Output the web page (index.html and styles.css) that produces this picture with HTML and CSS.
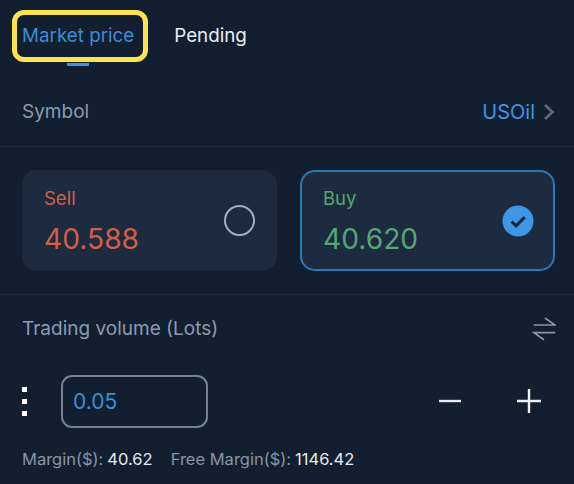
FILE: index.html
```html
<!DOCTYPE html>
<html lang="en">
<head>
<meta charset="utf-8">
<title>Market order</title>
<link rel="stylesheet" href="styles.css">
</head>
<body>
<main class="panel">
  <nav class="tabs">
    <div class="tab tab-active">Market price<span class="tab-mark"></span><span class="highlight"></span></div>
    <div class="tab">Pending</div>
  </nav>
  <section class="row symbol-row">
    <span class="label">Symbol</span>
    <span class="symbol-value">USOil
      <svg class="chevron" width="12" height="18" viewBox="0 0 12 18"><path d="M2 2l7.500 7-7.500 7" fill="none" stroke="#5a6a80" stroke-width="2.600"/></svg>
    </span>
  </section>
  <section class="cards">
    <div class="card">
      <div class="card-text">
        <div class="card-title sell">Sell</div>
        <div class="card-price sell">40.588</div>
      </div>
      <span class="radio"></span>
    </div>
    <div class="card card-selected">
      <div class="card-text">
        <div class="card-title buy">Buy</div>
        <div class="card-price buy">40.620</div>
      </div>
      <svg class="check" width="32" height="32" viewBox="0 0 32 32"><circle cx="16" cy="16" r="15.500" fill="#3f96e4"/><path d="M9.500 16.500l4.600 4.400 8.600-8.800" fill="none" stroke="#15263c" stroke-width="3"/></svg>
    </div>
  </section>
  <section class="volume">
    <div class="volume-head">
      <span class="label">Trading volume (Lots)</span>
      <svg width="24" height="24" viewBox="0 0 24 24"><path d="M1.700 8H23L13 1M23.300 15.700H2l10 7" fill="none" stroke="#8696ab" stroke-width="1.700"/></svg>
    </div>
    <div class="stepper">
      <div class="dots"><i></i><i></i><i></i></div>
      <div class="field">0.05</div>
      <svg class="minus" width="22" height="4" viewBox="0 0 22 4"><path d="M0 2h22" stroke="#e8ecf1" stroke-width="2.400"/></svg>
      <svg class="plus" width="24" height="24" viewBox="0 0 24 24"><path d="M0 12h24M12 0v24" stroke="#eef1f4" stroke-width="2.400"/></svg>
    </div>
    <div class="margins">
      <span class="margin-label">Margin($):</span><span class="margin-value">40.62</span><span class="margin-label free">Free Margin($):</span><span class="margin-value">1146.42</span>
    </div>
  </section>
</main>
</body>
</html>
```
FILE: styles.css
```css
* { box-sizing: border-box; }
html, body { margin: 0; height: 100%; }
body { background: #121f30; overflow: hidden; }
.panel {
  width: 574px;
  height: 484px;
  font-family: Inter, "Liberation Sans", sans-serif;
  color: #e8ecf1;
  overflow: hidden;
}
.tabs {
  display: flex;
  gap: 40px;
  padding: 0 22px;
  height: 71px;
}
.tab {
  position: relative;
  padding-top: 24px;
  font-size: 18.800px;
  line-height: 24px;
  color: #e9edf1;
}
.tab-active { color: #3b8fd6; }
.tab-mark {
  position: absolute;
  left: 45px;
  top: 63px;
  width: 22px;
  height: 3px;
  background: #3a96dc;
}
.highlight {
  position: absolute;
  left: -10px;
  top: 10px;
  width: 136px;
  height: 52px;
  border: 5px solid #fbe44d;
  border-radius: 12px;
}
.row {
  display: flex;
  justify-content: space-between;
  align-items: center;
}
.symbol-row {
  height: 76px;
  padding: 6px 19px 0 22px;
  border-bottom: 1px solid #1e2c3d;
}
.label { font-size: 19px; line-height: 24px; color: #8b9bb0; }
.symbol-value {
  display: flex;
  align-items: center;
  gap: 8px;
  font-size: 20px;
  color: #3f96e0;
}
.cards {
  display: flex;
  gap: 23px;
  padding: 23px 19px 23px 22px;
  border-bottom: 1px solid #1e2c3d;
}
.card {
  flex: 0 0 255px;
  height: 101px;
  display: flex;
  justify-content: space-between;
  align-items: center;
  padding: 0 22px;
  background: #1c2b40;
  border-radius: 15px;
}
.card-selected { border: 2px solid #2c78b8; padding: 0 19px 0 21px; }
.card-title { font-size: 18.500px; line-height: 24px; }
.card-price { margin-top: 12px; font-size: 28.200px; line-height: 34px; }
.sell { color: #d25f45; }
.buy { color: #55a672; }
.radio {
  width: 31px;
  height: 31px;
  border: 2px solid #a3afbd;
  border-radius: 50%;
}
.volume { padding: 0 18px 0 22px; }
.volume-head {
  display: flex;
  justify-content: space-between;
  align-items: center;
  height: 68px;
}
.stepper {
  display: flex;
  align-items: center;
  height: 52px;
  margin-top: 12px;
}
.dots { display: flex; flex-direction: column; gap: 7px; width: 39px; }
.dots i { display: block; width: 5px; height: 5px; background: #fff; }
.field {
  width: 147px;
  height: 53px;
  padding: 0 10px;
  border: 2px solid #71839a;
  border-radius: 11px;
  font-size: 21px;
  line-height: 49px;
  color: #3b8fd6;
}
.minus { margin-left: auto; }
.plus { margin: 0 15px 0 56px; }
.margins { margin-top: 20px; font-size: 16.500px; line-height: 24px; white-space: nowrap; }
.margin-label { margin-right: 4px; color: #8596aa; }
.margin-value { color: #e6eaee; }
.free { margin-left: 18px; }
```
